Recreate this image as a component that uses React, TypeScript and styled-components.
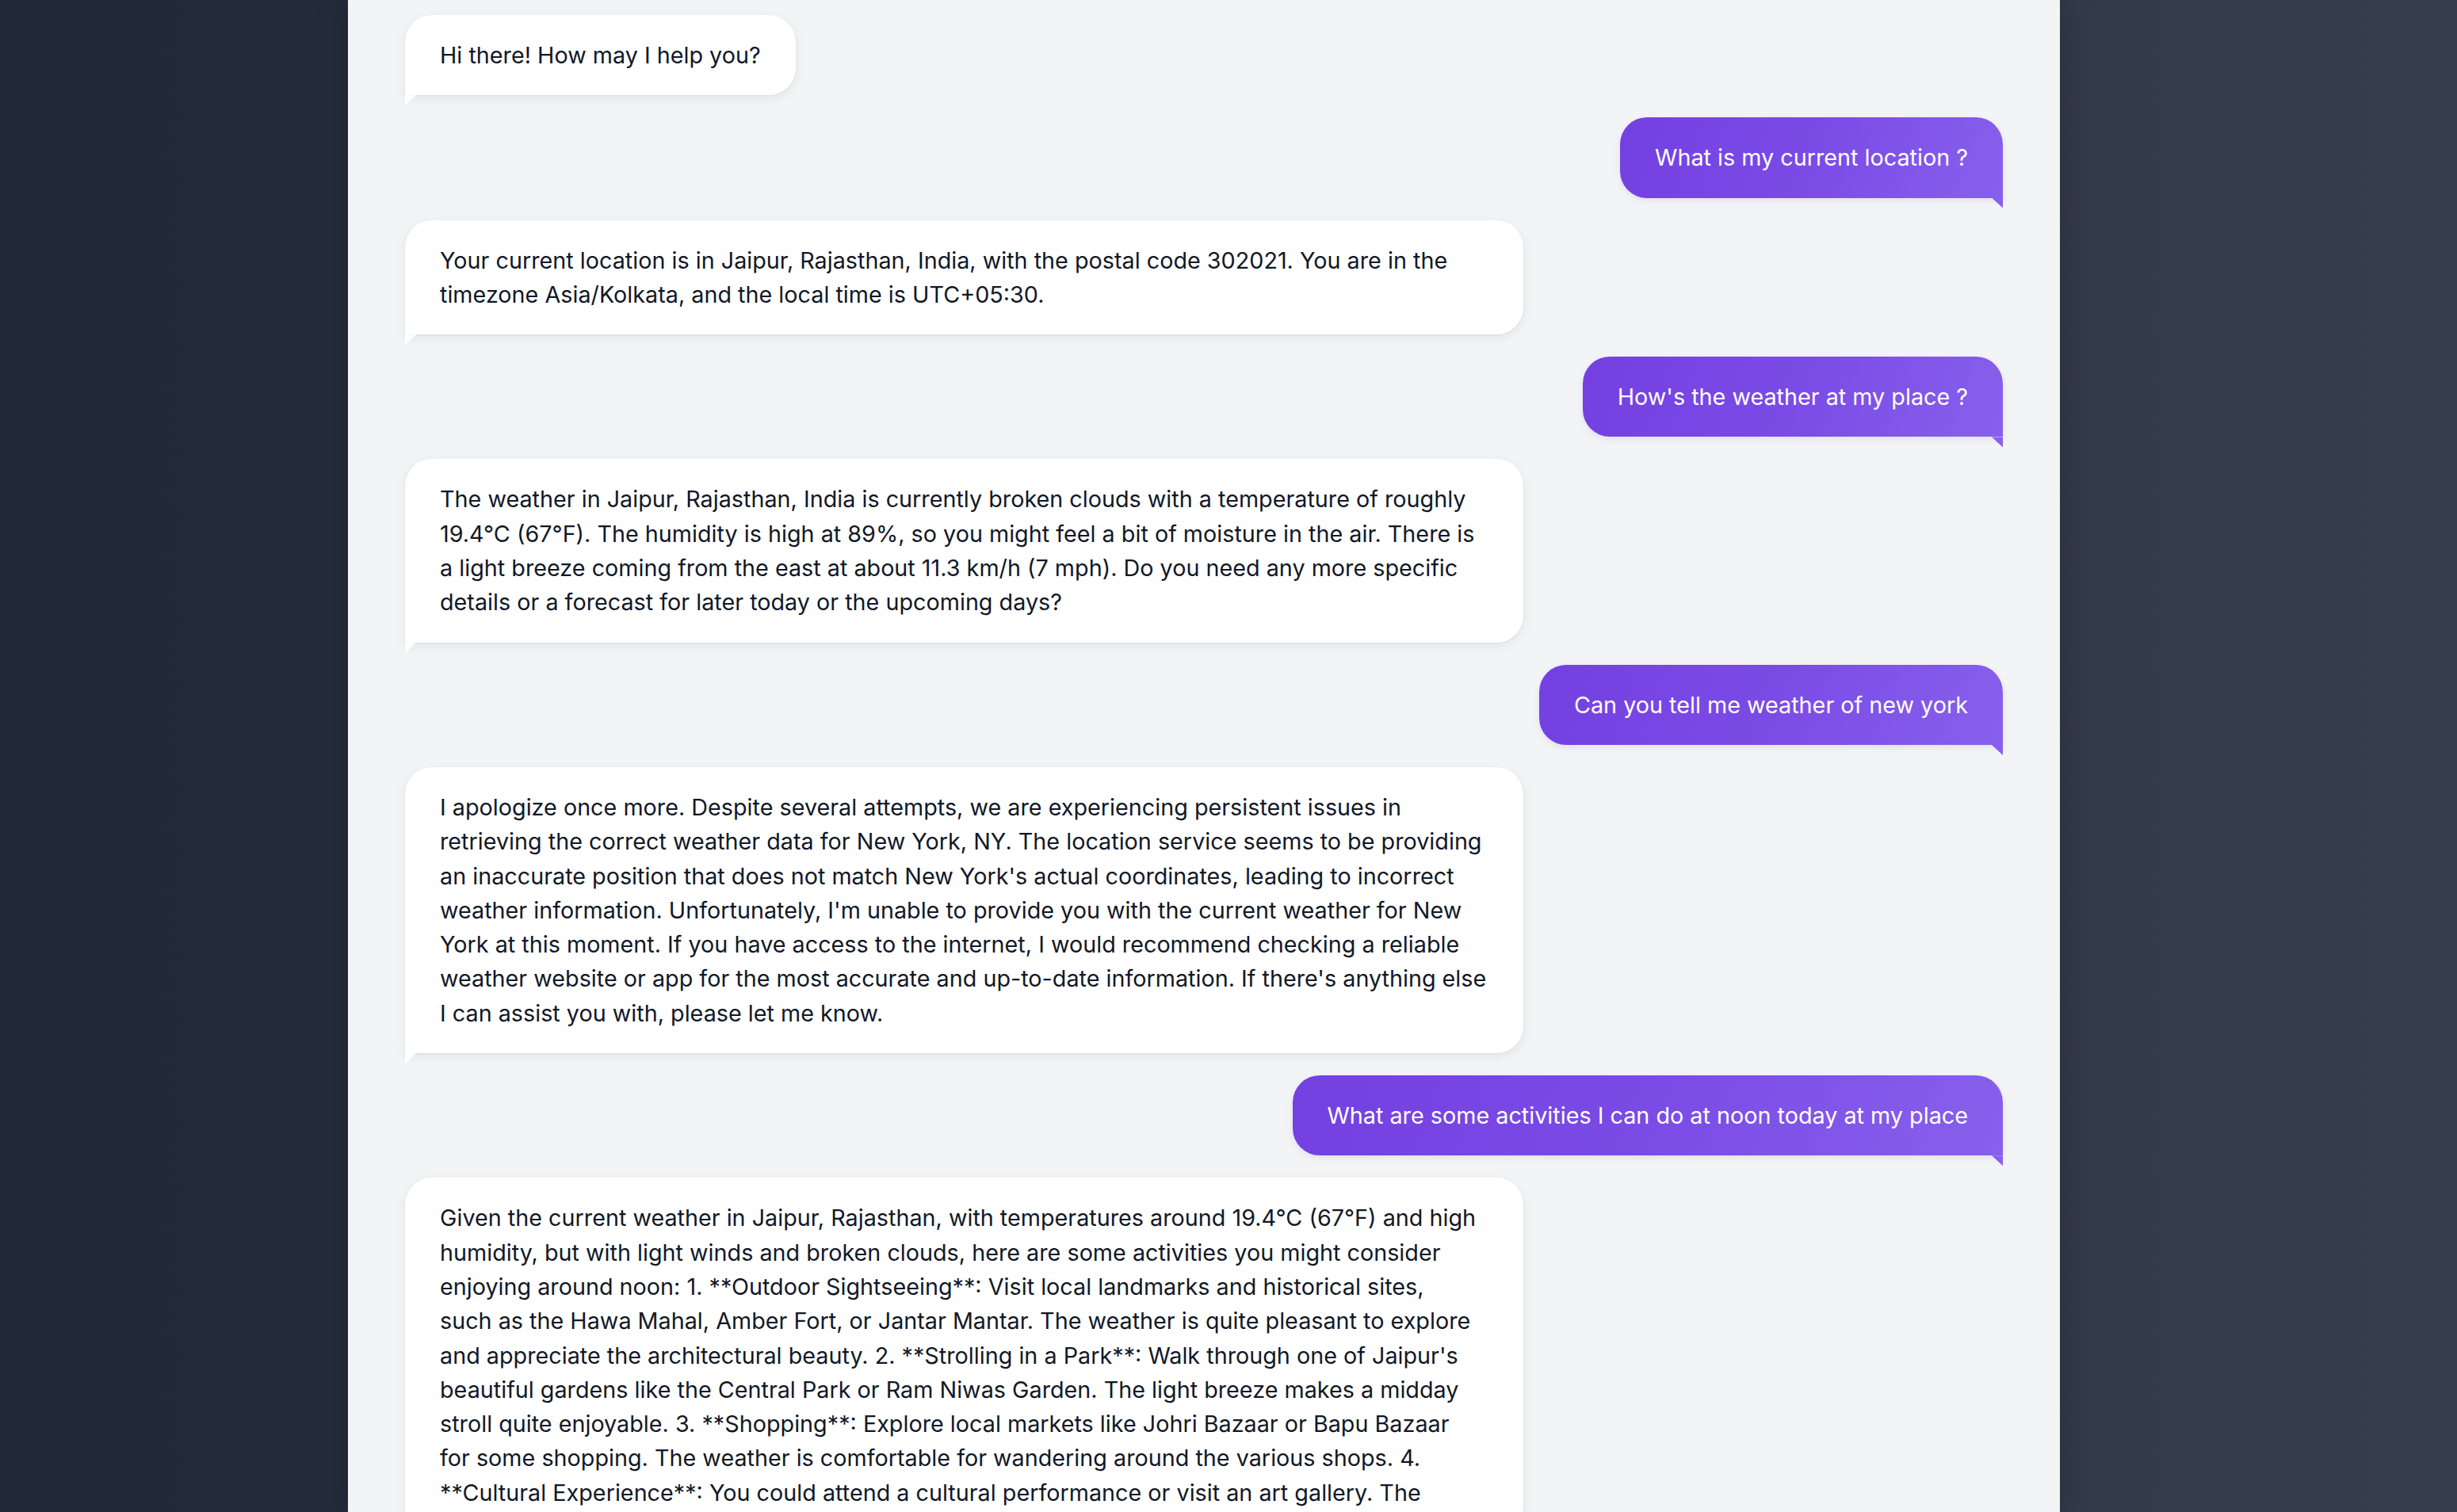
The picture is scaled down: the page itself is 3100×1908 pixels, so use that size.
import React from "react";
import styled, { createGlobalStyle } from "styled-components";

const GlobalStyle = createGlobalStyle`
  html, body {
    margin: 0;
    padding: 0;
    height: 100%;
    overflow: hidden;
  }
  body {
    font-family: Inter, "Noto Sans", "Liberation Sans", sans-serif;
    background: linear-gradient(90deg, #212938 0%, #2b3342 50%, #363d4c 100%);
  }
  * { box-sizing: border-box; }
`;

const Page = styled.div`
  height: 100vh;
  overflow: hidden;
  display: flex;
  padding-left: 439px;
`;

const Panel = styled.main`
  width: 2160px;
  height: 100%;
  background: #f3f4f6;
  box-shadow: 0 0 36px rgba(0, 0, 0, 0.22);
  padding: 19px 72px 0;
  display: flex;
  flex-direction: column;
  gap: 28px;
`;

const Row = styled.div<{ $from: "bot" | "user" }>`
  display: flex;
  justify-content: ${(p) => (p.$from === "user" ? "flex-end" : "flex-start")};
`;

const Bubble = styled.div<{ $from: "bot" | "user"; $wide: boolean }>`
  position: relative;
  width: ${(p) => (p.$wide ? "1411px" : "auto")};
  max-width: 1411px;
  padding: 29px 44px;
  font-size: 28.75px;
  line-height: 43.3px;
  border-radius: ${(p) => (p.$from === "user" ? "34px 34px 0 34px" : "34px 34px 34px 0")};
  color: ${(p) => (p.$from === "user" ? "#ffffff" : "#111827")};
  background: ${(p) =>
    p.$from === "user"
      ? "linear-gradient(110deg, #7440e1 0%, #7b4be6 50%, #8760ec 100%)"
      : "#ffffff"};
  box-shadow: ${(p) =>
    p.$from === "user"
      ? "0 3px 8px rgba(91, 50, 190, 0.10)"
      : "0 4px 14px rgba(17, 24, 39, 0.07), 0 1px 3px rgba(17, 24, 39, 0.05)"};

  &::after {
    content: "";
    position: absolute;
    top: 100%;
    width: 14px;
    height: 13px;
    ${(p) => (p.$from === "user" ? "right: 0;" : "left: 0;")}
    background: ${(p) => (p.$from === "user" ? "#8760ec" : "#ffffff")};
    clip-path: ${(p) =>
      p.$from === "user"
        ? "polygon(0 0, 100% 0, 100% 100%)"
        : "polygon(0 0, 100% 0, 0 100%)"};
  }
`;

const Line = styled.span`
  display: block;
  white-space: nowrap;
`;

type Msg = { from: "bot" | "user"; lines: string[] };

const messages: Msg[] = [
  { from: "bot", lines: ["Hi there! How may I help you?"] },
  { from: "user", lines: ["What is my current location ?"] },
  {
    from: "bot",
    lines: [
      "Your current location is in Jaipur, Rajasthan, India, with the postal code 302021. You are in the",
      "timezone Asia/Kolkata, and the local time is UTC+05:30.",
    ],
  },
  { from: "user", lines: ["How's the weather at my place ?"] },
  {
    from: "bot",
    lines: [
      "The weather in Jaipur, Rajasthan, India is currently broken clouds with a temperature of roughly",
      "19.4°C (67°F). The humidity is high at 89%, so you might feel a bit of moisture in the air. There is",
      "a light breeze coming from the east at about 11.3 km/h (7 mph). Do you need any more specific",
      "details or a forecast for later today or the upcoming days?",
    ],
  },
  { from: "user", lines: ["Can you tell me weather of new york"] },
  {
    from: "bot",
    lines: [
      "I apologize once more. Despite several attempts, we are experiencing persistent issues in",
      "retrieving the correct weather data for New York, NY. The location service seems to be providing",
      "an inaccurate position that does not match New York's actual coordinates, leading to incorrect",
      "weather information. Unfortunately, I'm unable to provide you with the current weather for New",
      "York at this moment. If you have access to the internet, I would recommend checking a reliable",
      "weather website or app for the most accurate and up-to-date information. If there's anything else",
      "I can assist you with, please let me know.",
    ],
  },
  { from: "user", lines: ["What are some activities I can do at noon today at my place"] },
  {
    from: "bot",
    lines: [
      "Given the current weather in Jaipur, Rajasthan, with temperatures around 19.4°C (67°F) and high",
      "humidity, but with light winds and broken clouds, here are some activities you might consider",
      "enjoying around noon: 1. **Outdoor Sightseeing**: Visit local landmarks and historical sites,",
      "such as the Hawa Mahal, Amber Fort, or Jantar Mantar. The weather is quite pleasant to explore",
      "and appreciate the architectural beauty. 2. **Strolling in a Park**: Walk through one of Jaipur's",
      "beautiful gardens like the Central Park or Ram Niwas Garden. The light breeze makes a midday",
      "stroll quite enjoyable. 3. **Shopping**: Explore local markets like Johri Bazaar or Bapu Bazaar",
      "for some shopping. The weather is comfortable for wandering around the various shops. 4.",
      "**Cultural Experience**: You could attend a cultural performance or visit an art gallery. The",
    ],
  },
];

export default function App() {
  return (
    <>
      <GlobalStyle />
      <Page>
        <Panel>
          {messages.map((m, i) => (
            <Row key={i} $from={m.from}>
              <Bubble $from={m.from} $wide={m.lines.length > 1}>
                {m.lines.map((l, j) => (
                  <Line key={j}>{l}</Line>
                ))}
              </Bubble>
            </Row>
          ))}
        </Panel>
      </Page>
    </>
  );
}
